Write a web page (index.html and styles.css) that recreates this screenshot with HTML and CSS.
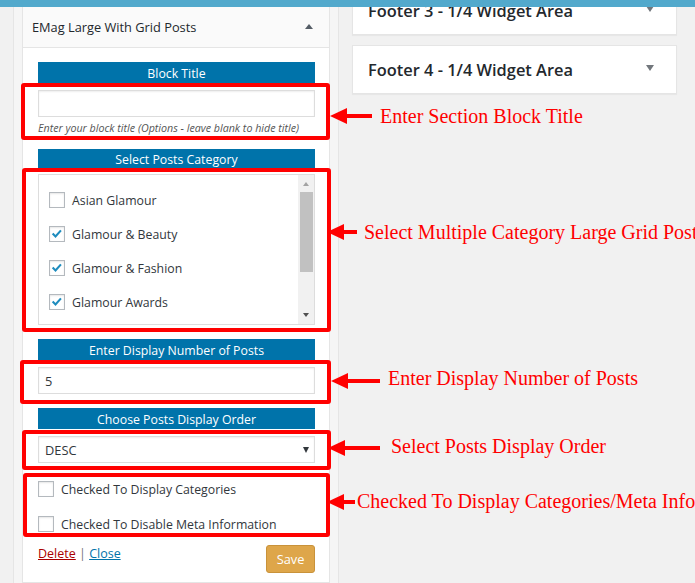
FILE: index.html
```html
<!DOCTYPE html>
<html>
<head>
<meta charset="utf-8">
<link rel="stylesheet" href="styles.css">
</head>
<body>
<div class="topbar"></div>
<div class="page">
  <div class="sidebar">
    <div class="widget">
      <div class="w-head"><span>EMag Large With Grid Posts</span><span class="caret-up"></span></div>
      <div class="w-body">
        <div class="field">
          <div class="bar">Block Title</div>
          <div class="input"></div>
          <div class="hint">Enter your block title (Options - leave blank to hide title)</div>
        </div>
        <div class="field">
          <div class="bar bar-short">Select Posts Category</div>
          <div class="list">
            <div class="items">
              <div class="item"><span class="cb"></span>Asian Glamour</div>
              <div class="item"><span class="cb"><svg viewBox="0 0 16 16" width="14" height="14"><path d="M3 7.5 L6.3 10.8 L12.5 3.8" fill="none" stroke="#1e8cbe" stroke-width="2.4"/></svg></span>Glamour &amp; Beauty</div>
              <div class="item"><span class="cb"><svg viewBox="0 0 16 16" width="14" height="14"><path d="M3 7.5 L6.3 10.8 L12.5 3.8" fill="none" stroke="#1e8cbe" stroke-width="2.4"/></svg></span>Glamour &amp; Fashion</div>
              <div class="item"><span class="cb"><svg viewBox="0 0 16 16" width="14" height="14"><path d="M3 7.5 L6.3 10.8 L12.5 3.8" fill="none" stroke="#1e8cbe" stroke-width="2.4"/></svg></span>Glamour Awards</div>
            </div>
            <div class="scroll">
              <span class="sc-up"></span>
              <span class="sc-thumb"></span>
              <span class="sc-down"></span>
            </div>
          </div>
        </div>
        <div class="field">
          <div class="bar">Enter Display Number of Posts</div>
          <div class="input input-val">5</div>
        </div>
        <div class="field">
          <div class="bar">Choose Posts Display Order</div>
          <div class="input select"><span>DESC</span><span class="sel-caret"></span></div>
        </div>
        <div class="checks">
          <div class="check"><span class="cb"></span>Checked To Display Categories</div>
          <div class="check"><span class="cb"></span>Checked To Disable Meta Information</div>
        </div>
        <div class="actions">
          <div class="links"><a class="del">Delete</a> <span class="sep">|</span> <a class="close">Close</a></div>
          <div class="save">Save</div>
        </div>
      </div>
    </div>
  </div>
  <div class="areas">
    <div class="area area-cut"><span>Footer 3 - 1/4 Widget Area</span><span class="caret-down"></span></div>
    <div class="area"><span>Footer 4 - 1/4 Widget Area</span><span class="caret-down"></span></div>
  </div>
</div>

<div class="notes">
  <div class="rbox rb1"></div>
  <div class="rbox rb2"></div>
  <div class="rbox rb3"></div>
  <div class="rbox rb4"></div>
  <div class="rbox rb5"></div>

  <svg class="arrow ar1" width="42" height="16" viewBox="0 0 42 16"><polygon points="0,8 17,0 17,16" fill="#f00"/><rect x="16" y="6" width="26" height="4" fill="#f00"/></svg>
  <svg class="arrow ar2" width="30" height="16" viewBox="0 0 30 16"><polygon points="0,8 17,0 17,16" fill="#f00"/><rect x="16" y="6" width="14" height="4" fill="#f00"/></svg>
  <svg class="arrow ar3" width="49" height="16" viewBox="0 0 49 16"><polygon points="0,8 17,0 17,16" fill="#f00"/><rect x="16" y="6" width="33" height="4" fill="#f00"/></svg>
  <svg class="arrow ar4" width="52" height="16" viewBox="0 0 52 16"><polygon points="0,8 17,0 17,16" fill="#f00"/><rect x="16" y="6" width="36" height="4" fill="#f00"/></svg>
  <svg class="arrow ar5" width="28" height="16" viewBox="0 0 28 16"><polygon points="0,8 17,0 17,16" fill="#f00"/><rect x="16" y="6" width="12" height="4" fill="#f00"/></svg>

  <div class="note n1">Enter Section Block Title</div>
  <div class="note n2">Select Multiple Category Large Grid Posts</div>
  <div class="note n3">Enter Display Number of Posts</div>
  <div class="note n4">Select Posts Display Order</div>
  <div class="note n5">Checked To Display Categories/Meta Info</div>
</div>
</body>
</html>
```

FILE: styles.css
```css
html, body {
  margin: 0;
  padding: 0;
}
body {
  width: 695px;
  height: 583px;
  overflow: hidden;
  position: relative;
  background: #f1f1f1;
  font-family: "Open Sans", "Noto Sans", sans-serif;
  color: #32373c;
}
.topbar {
  height: 7px;
  background: #52a9cc;
  position: relative;
  z-index: 2;
}
.page {
  display: flex;
  align-items: flex-start;
  padding-left: 13px;
  height: 576px;
}
.sidebar {
  width: 326px;
  box-sizing: border-box;
  height: 100%;
  background: #f5f5f5;
  border-left: 1px solid #e5e5e5;
  border-right: 1px solid #e5e5e5;
  padding: 0 8px;
}
.widget {
  height: 100%;
  box-sizing: border-box;
  background: #fff;
  border: 1px solid #e5e5e5;
  border-top: 0;
}
.w-head {
  height: 40px;
  border-bottom: 1px solid #e5e5e5;
  background: #fafafa;
  display: flex;
  align-items: center;
  justify-content: space-between;
  padding: 0 16px 0 9px;
  font-size: 12.8px;
  color: #23282d;
}
.caret-up {
  width: 0;
  height: 0;
  border-left: 4px solid transparent;
  border-right: 4px solid transparent;
  border-bottom: 5px solid #555d66;
  margin-top: -2px;
}
.w-body {
  padding: 14px 14px 0 15px;
}
.field {
  margin-bottom: 14px;
}
.bar {
  height: 21px;
  box-sizing: border-box;
  padding-top: 2px;
  line-height: 19px;
  background: #0073aa;
  color: #fff;
  text-align: center;
  font-size: 12.3px;
  margin-bottom: 7px;
}
.bar-short {
  height: 20px;
  line-height: 18px;
  margin-bottom: 5px;
}
.input {
  height: 27px;
  box-sizing: border-box;
  border: 1px solid #ddd;
  background: #fff;
  box-shadow: inset 0 1px 2px rgba(0, 0, 0, 0.07);
}
.input-val, .select {
  font-size: 12.8px;
  color: #32373c;
  display: flex;
  align-items: center;
  padding-left: 6px;
}
.select {
  justify-content: space-between;
  padding-right: 5px;
}
.sel-caret {
  width: 0;
  height: 0;
  border-left: 3.5px solid transparent;
  border-right: 3.5px solid transparent;
  border-top: 6px solid #32373c;
}
.hint {
  font-size: 10.7px;
  font-style: italic;
  color: #555;
  margin-top: 4px;
  line-height: 14px;
  white-space: nowrap;
}
.list {
  height: 151px;
  box-sizing: border-box;
  border: 1px solid #ddd;
  display: flex;
  background: #fff;
}
.items {
  flex: 1;
  padding: 17px 0 0 10px;
  display: flex;
  flex-direction: column;
  gap: 18px;
}
.item, .check {
  display: flex;
  align-items: center;
  gap: 7px;
  height: 16px;
  font-size: 12.3px;
  color: #32373c;
}
.cb {
  width: 16px;
  height: 16px;
  box-sizing: border-box;
  border: 1px solid #b4b9be;
  background: #fff;
  box-shadow: inset 0 1px 2px rgba(0, 0, 0, 0.1);
  display: flex;
  align-items: center;
  justify-content: center;
  flex: none;
}
.scroll {
  width: 16px;
  background: #f1f1f1;
  display: flex;
  flex-direction: column;
  align-items: center;
}
.sc-up {
  width: 0;
  height: 0;
  margin-top: 7px;
  border-left: 3.5px solid transparent;
  border-right: 3.5px solid transparent;
  border-bottom: 4px solid #a3a3a3;
}
.sc-thumb {
  width: 13px;
  height: 80px;
  margin-top: 6px;
  background: #c1c1c1;
}
.sc-down {
  width: 0;
  height: 0;
  margin-top: auto;
  margin-bottom: 7px;
  border-left: 3.5px solid transparent;
  border-right: 3.5px solid transparent;
  border-top: 4px solid #505050;
}
.checks {
  padding-top: 4px;
  display: flex;
  flex-direction: column;
  gap: 19px;
}
.actions {
  display: flex;
  justify-content: space-between;
  align-items: flex-start;
  margin-top: 13px;
}
.links {
  font-size: 12.5px;
  line-height: 18px;
}
.del {
  color: #a00;
  text-decoration: underline;
}
.sep {
  color: #72777c;
}
.close {
  color: #0073aa;
  text-decoration: underline;
}
.save {
  width: 49px;
  height: 28px;
  box-sizing: border-box;
  background: #dea64a;
  border: 1px solid #c9923a;
  border-radius: 3px;
  color: #fff;
  font-size: 12.8px;
  display: flex;
  align-items: center;
  justify-content: center;
}
.areas {
  margin-left: 13px;
  width: 325px;
}
.area {
  height: 49px;
  box-sizing: border-box;
  background: #fff;
  border: 1px solid #e5e5e5;
  box-shadow: 0 1px 1px rgba(0, 0, 0, 0.04);
  display: flex;
  align-items: center;
  justify-content: space-between;
  padding: 0 22px 0 15px;
  font-size: 16.4px;
  font-weight: 600;
  color: #23282d;
  margin-top: 10px;
}
.area-cut {
  margin-top: -21px;
}
.caret-down {
  align-self: flex-start;
  margin-top: 19px;
  width: 0;
  height: 0;
  border-left: 4px solid transparent;
  border-right: 4px solid transparent;
  border-top: 6px solid #72777c;
}
.notes {
  position: absolute;
  left: 0;
  top: 0;
  width: 695px;
  height: 583px;
  pointer-events: none;
  z-index: 3;
}
.rbox {
  position: absolute;
  box-sizing: border-box;
  border: 4px solid #f00;
  border-radius: 3px;
}
.rb1 { left: 21px; top: 83px; width: 309px; height: 57px; }
.rb2 { left: 22px; top: 168px; width: 309px; height: 164px; }
.rb3 { left: 20px; top: 360px; width: 311px; height: 44px; }
.rb4 { left: 22px; top: 430px; width: 309px; height: 40px; }
.rb5 { left: 23px; top: 473px; width: 307px; height: 64px; }
.arrow {
  position: absolute;
}
.ar1 { left: 330px; top: 108px; }
.ar2 { left: 327px; top: 224px; }
.ar3 { left: 331px; top: 373px; }
.ar4 { left: 328px; top: 440px; }
.ar5 { left: 327px; top: 494px; }
.note {
  position: absolute;
  font-family: "Liberation Serif", "Times New Roman", serif;
  font-size: 20px;
  line-height: 23px;
  color: #f00;
  white-space: nowrap;
}
.n1 { left: 380px; top: 105px; }
.n2 { left: 364px; top: 221px; }
.n3 { left: 388px; top: 367px; }
.n4 { left: 391px; top: 435px; }
.n5 { left: 357px; top: 490px; }
```
